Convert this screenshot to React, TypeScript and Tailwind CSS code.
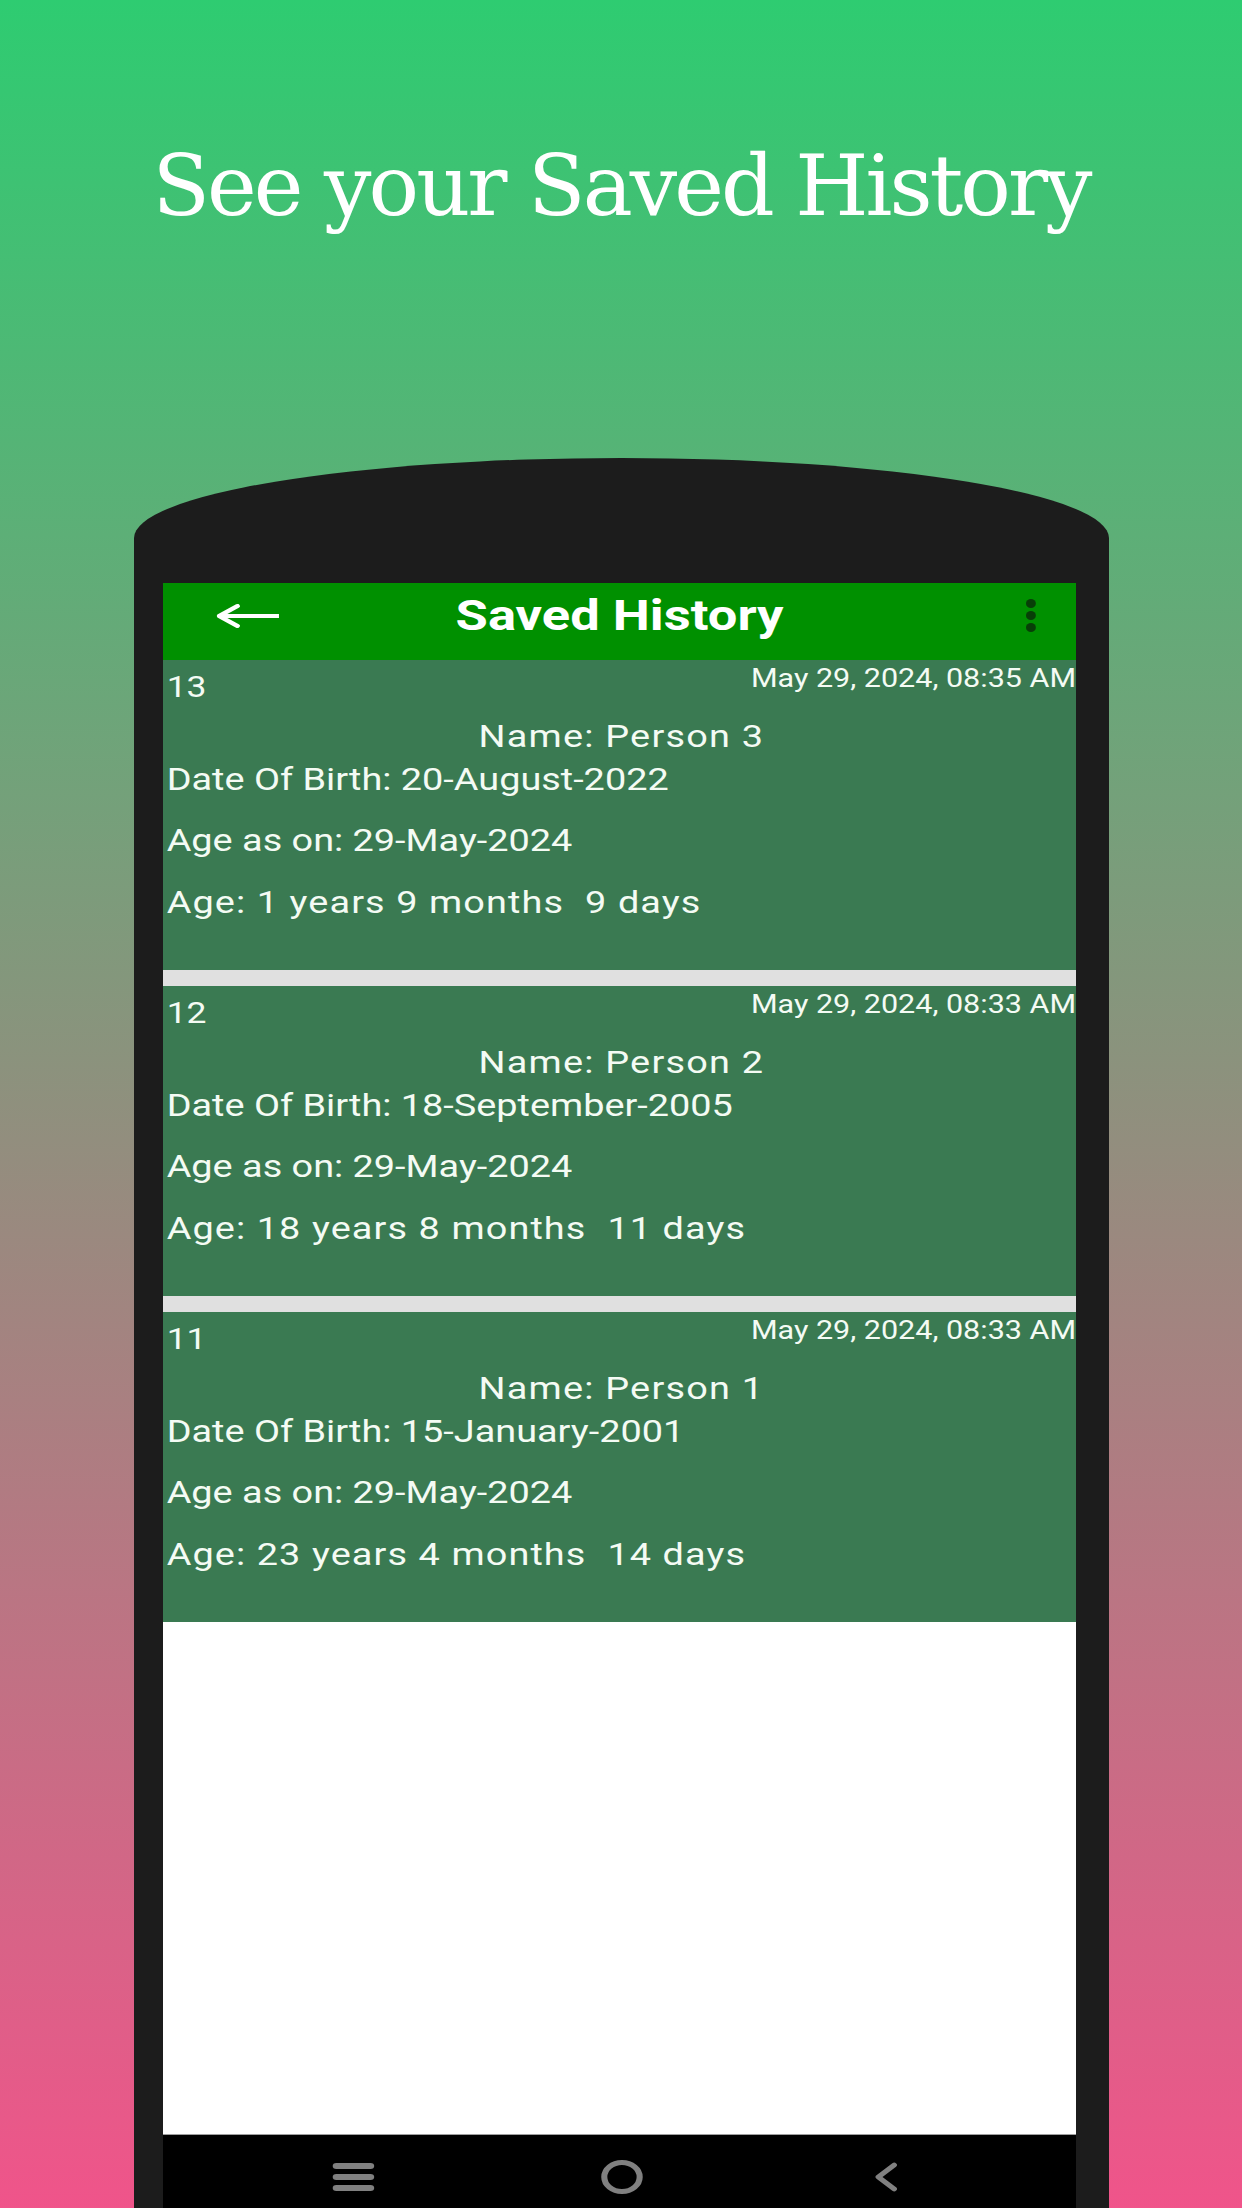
import React from "react";

type Entry = {
  id: number;
  savedAt: string;
  name: string;
  dob: string;
  asOn: string;
  age: string;
};

const entries: Entry[] = [
  {
    id: 13,
    savedAt: "May 29, 2024, 08:35 AM",
    name: "Person 3",
    dob: "20-August-2022",
    asOn: "29-May-2024",
    age: "1 years 9 months  9 days",
  },
  {
    id: 12,
    savedAt: "May 29, 2024, 08:33 AM",
    name: "Person 2",
    dob: "18-September-2005",
    asOn: "29-May-2024",
    age: "18 years 8 months  11 days",
  },
  {
    id: 11,
    savedAt: "May 29, 2024, 08:33 AM",
    name: "Person 1",
    dob: "15-January-2001",
    asOn: "29-May-2024",
    age: "23 years 4 months  14 days",
  },
];

function HistoryCard({ entry }: { entry: Entry }) {
  return (
    <div className="flex h-[310px] flex-col bg-[#3a7a52] pl-[3px] pt-[6px] text-[#f4fbf4]">
      <div className="flex items-start justify-between">
        <span className="mt-[7px] text-[29px] leading-none">{entry.id}</span>
        <span className="text-[25px] leading-none">{entry.savedAt}</span>
      </div>
      <p className="mt-[19px] text-center text-[31px] leading-none tracking-[1px]">
        Name: {entry.name}
      </p>
      <p className="mt-[12px] text-[31px] leading-none">
        Date Of Birth: {entry.dob}
      </p>
      <p className="mt-[30px] text-[31px] leading-none">
        Age as on: {entry.asOn}
      </p>
      <p className="mt-[31px] whitespace-pre text-[31px] leading-none tracking-[0.9px]">
        Age: {entry.age}
      </p>
    </div>
  );
}

export default function App() {
  return (
    <div className="flex h-[2208px] w-full flex-col items-center overflow-hidden bg-[linear-gradient(to_bottom,#2ecc71,#f0548a)]">
      {/* Heading */}
      <h1
        className="mt-[144px] text-[84px] leading-none tracking-[-3px] text-white"
        style={{ fontFamily: '"DejaVu Serif", "Liberation Serif", serif' }}
      >
        See your Saved History
      </h1>

      {/* Phone frame */}
      <div className="mt-[230px] flex w-[975px] flex-1 flex-col rounded-t-[50%_80px] bg-[#1c1c1c] pl-[29px] pr-[33px] pt-[125px]">
        <div className="flex-1 overflow-hidden bg-white">
          {/* screenshot is stretched horizontally, so the screen is laid out narrower and scaled */}
          <div
            className="flex h-full w-[748px] origin-top-left scale-x-[1.2207] flex-col bg-white"
            style={{ fontFamily: 'Roboto, "Noto Sans", sans-serif' }}
          >
            {/* App bar */}
            <div className="grid h-[77px] shrink-0 grid-cols-[1fr_auto_1fr] items-center bg-[#009000] pb-[12px]">
              <div className="pl-[44px]">
                <svg width="51" height="24" viewBox="0 0 51 24" fill="none">
                  <path
                    d="M2 12H51M17 2L2 12L17 22"
                    stroke="white"
                    strokeWidth="4"
                    strokeLinecap="round"
                    strokeLinejoin="round"
                  />
                </svg>
              </div>
              <span className="text-[43px] font-bold leading-none text-white">
                Saved History
              </span>
              <div className="flex flex-col items-end gap-[3px] pr-[33px]">
                <span className="h-[9px] w-[8px] rounded-full bg-[#083f08]" />
                <span className="h-[9px] w-[8px] rounded-full bg-[#083f08]" />
                <span className="h-[9px] w-[8px] rounded-full bg-[#083f08]" />
              </div>
            </div>

            {/* List */}
            <div className="flex shrink-0 flex-col">
              {entries.map((e, i) => (
                <React.Fragment key={e.id}>
                  {i > 0 && <div className="h-[16px] bg-[#e0e0e0]" />}
                  <HistoryCard entry={e} />
                </React.Fragment>
              ))}
            </div>

            <div className="flex-1 bg-white" />

            {/* System nav bar */}
            <div className="flex h-[74px] shrink-0 items-center border-t border-[#9e9e9e] bg-black pl-[139px] pt-[10px]">
              <div className="flex w-[34px] flex-col gap-[5px]">
                <span className="h-[6px] rounded-full bg-[#808080]" />
                <span className="h-[6px] rounded-full bg-[#808080]" />
                <span className="h-[6px] rounded-full bg-[#808080]" />
              </div>
              <span className="ml-[186px] h-[34px] w-[34px] rounded-full border-[5px] border-[#808080]" />
              <svg
                className="ml-[189px]"
                width="20"
                height="30"
                viewBox="0 0 20 30"
                fill="none"
              >
                <path
                  d="M17 3L4 15L17 27"
                  stroke="#808080"
                  strokeWidth="4.5"
                  strokeLinecap="round"
                  strokeLinejoin="round"
                />
              </svg>
            </div>
          </div>
        </div>
      </div>
    </div>
  );
}
